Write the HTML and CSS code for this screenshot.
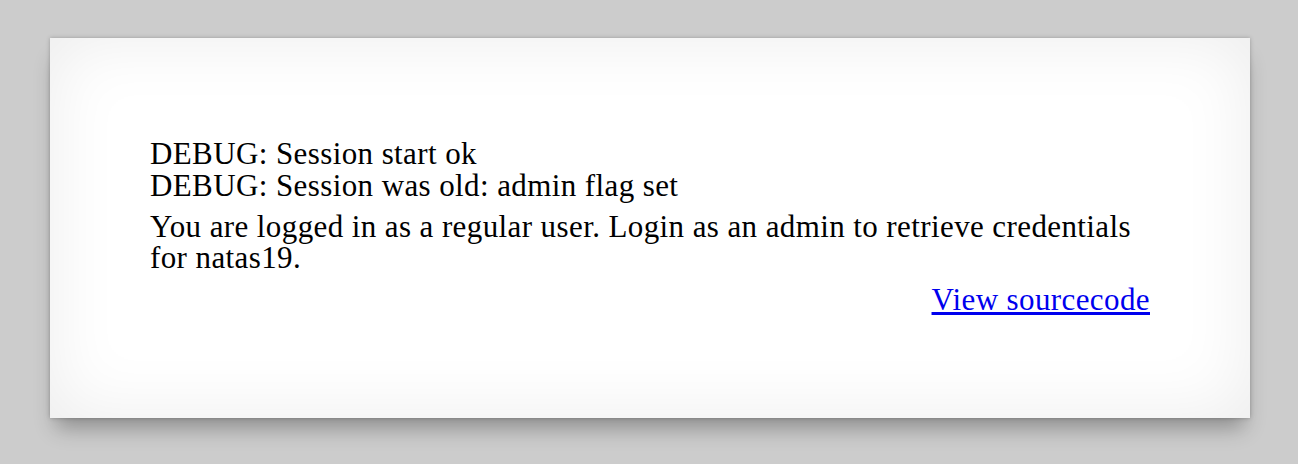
FILE: index.html
```html
<!DOCTYPE html>
<html lang="en">
<head>
    <meta charset="UTF-8">
    <title>natas18</title>
    <link rel="stylesheet" href="styles.css">
</head>
<body>

    <!-- Caixa principal -->
    <div id="content">
        <div class="debug">DEBUG: Session start ok</div>
        <div class="debug">DEBUG: Session was old: admin flag set</div>
        <div class="message">You are logged in as a regular user. Login as an admin to retrieve credentials for natas19.</div>
        <div id="viewsource"><a href="index-source.html">View sourcecode</a></div>
    </div>

</body>
</html>
```

FILE: styles.css
```css
body {
    font-family: 'Liberation Serif', 'Times New Roman', serif;
    background-color: #cccccc;
    margin: 0;
    padding: 38px 50px;
}

#content {
    width: 1000px;
    min-height: 180px;
    padding: 100px;
    background-color: #ffffff;
    font-size: 31px;
    letter-spacing: 0.4px;
    line-height: 32px;
    color: #000;
    box-shadow: inset 0 0 70px rgba(0, 0, 0, 0.08),
                0 0 4px rgba(0, 0, 0, 0.25),
                0 16px 20px -6px rgba(0, 0, 0, 0.3);
}

.message {
    margin-top: 9px;
    line-height: 31px;
}

#viewsource {
    text-align: right;
    margin-top: 11px;
}

#viewsource a {
    color: #0000ee;
}
```
